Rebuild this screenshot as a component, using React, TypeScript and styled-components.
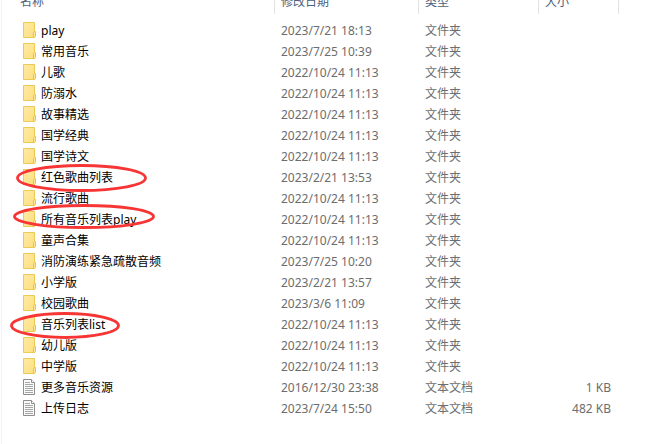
import React from 'react';
import styled, { createGlobalStyle } from 'styled-components';

const GlobalStyle = createGlobalStyle`
  body {
    margin: 0;
    background: #fff;
    color: #000;
    font: 12px/20px "Noto Sans", "Noto Sans CJK SC", sans-serif;
  }
`;

const Pane = styled.main`
  min-height: 100vh;
  margin-left: 1px;
  box-sizing: border-box;
  border-left: 1px solid #f3f3f3;
  overflow: hidden;
`;

const FileTable = styled.table`
  width: 100%;
  table-layout: fixed;
  border-collapse: separate;
  border-spacing: 0;
`;

const Column = styled.col<{ $width?: number }>`
  width: ${({ $width }) => ($width ? `${$width}px` : 'auto')};
`;

const HeaderCell = styled.th<{ $inset: number; $divided?: boolean }>`
  height: 14px;
  box-sizing: border-box;
  padding: 0 0 0 ${({ $inset }) => $inset}px;
  border-right: ${({ $divided }) => ($divided ? '1px solid #e2e2e2' : 'none')};
  text-align: left;
  vertical-align: top;
`;

const SortButton = styled.button`
  display: block;
  margin: -8px 0 0;
  padding: 0;
  border: 0;
  background: none;
  color: #4c607a;
  font: inherit;
  font-weight: 400;
  line-height: 20px;
`;

const Body = styled.tbody`
  &::before {
    content: '';
    display: table-row;
    height: 6px;
  }
`;

const Cell = styled.td<{ $align?: 'left' | 'right' }>`
  height: 21px;
  box-sizing: border-box;
  padding: 1px 8px 0 6px;
  color: #6d6d6d;
  text-align: ${({ $align }) => $align ?? 'left'};
  white-space: nowrap;
`;

const NameCell = styled(Cell)`
  position: relative;
  padding: 0 0 0 21px;
  color: #000;
`;

const FileName = styled.div`
  display: flex;
  align-items: flex-start;
  gap: 5px;
  height: 21px;
  line-height: 22px;
`;

const Icon = styled.svg`
  flex: none;
  width: 13px;
  height: 16px;
  margin-top: 2px;
`;

const Mark = styled.svg<{ $left: number; $top: number }>`
  position: absolute;
  z-index: 1;
  left: ${({ $left }) => $left}px;
  top: ${({ $top }) => $top}px;
  overflow: visible;
  pointer-events: none;
`;

const FolderIcon = () => (
  <Icon viewBox="0 0 13 16" aria-hidden="true">
    <defs>
      <linearGradient id="folder" x1="0" y1="0" x2="1" y2="1">
        <stop offset="0" stopColor="#ffeaa4" />
        <stop offset="1" stopColor="#fddf80" />
      </linearGradient>
    </defs>
    <path d="M.5.5h11v15H.5z" fill="url(#folder)" stroke="#eacb55" />
    <path d="M10.5 15.5v-5l1-1h1v5l-1 1z" fill="#ffe794" stroke="#e8c344" />
  </Icon>
);

const TextIcon = () => (
  <Icon viewBox="0 0 13 16" aria-hidden="true">
    <path d="M.5.5h8l3 3v12H.5z" fill="#fafafa" stroke="#8e8e8e" />
    <path d="M8.5.5v3h3" fill="#fff" stroke="#8e8e8e" />
    <path d="M2 3.5h5M2 5.5h8M2 7.5h8M2 9.5h8M2 11.5h8M2 13.5h8" stroke="#a3a8a6" />
  </Icon>
);

interface Ring {
  left: number;
  top: number;
  width: number;
  height: number;
}

interface Entry {
  name: string;
  date: string;
  size?: string;
  ring?: Ring;
}

const entries: Entry[] = [
  { name: 'play', date: '2023/7/21 18:13' },
  { name: '常用音乐', date: '2023/7/25 10:39' },
  { name: '儿歌', date: '2022/10/24 11:13' },
  { name: '防溺水', date: '2022/10/24 11:13' },
  { name: '故事精选', date: '2022/10/24 11:13' },
  { name: '国学经典', date: '2022/10/24 11:13' },
  { name: '国学诗文', date: '2022/10/24 11:13' },
  { name: '红色歌曲列表', date: '2023/2/21 13:53', ring: { left: 14, top: -3, width: 131, height: 28 } },
  { name: '流行歌曲', date: '2022/10/24 11:13' },
  { name: '所有音乐列表play', date: '2022/10/24 11:13', ring: { left: 11, top: -5, width: 142, height: 25 } },
  { name: '童声合集', date: '2022/10/24 11:13' },
  { name: '消防演练紧急疏散音频', date: '2023/7/25 10:20' },
  { name: '小学版', date: '2023/2/21 13:57' },
  { name: '校园歌曲', date: '2023/3/6 11:09' },
  { name: '音乐列表list', date: '2022/10/24 11:13', ring: { left: 8, top: -2, width: 110, height: 27 } },
  { name: '幼儿版', date: '2022/10/24 11:13' },
  { name: '中学版', date: '2022/10/24 11:13' },
  { name: '更多音乐资源', date: '2016/12/30 23:38', size: '1 KB' },
  { name: '上传日志', date: '2023/7/24 15:50', size: '482 KB' },
];

const RingMark = ({ left, top, width, height }: Ring) => (
  <Mark $left={left} $top={top} width={width} height={height} aria-hidden="true">
    <ellipse
      cx={width / 2}
      cy={height / 2}
      rx={width / 2 - 1.5}
      ry={height / 2 - 1.5}
      fill="none"
      stroke="#f73535"
      strokeWidth="2.8"
    />
  </Mark>
);

export default function App() {
  return (
    <>
      <GlobalStyle />
      <Pane>
        <FileTable>
          <colgroup>
            <Column $width={273} />
            <Column $width={144} />
            <Column $width={120} />
            <Column $width={80} />
            <Column />
          </colgroup>
          <thead>
            <tr>
              <HeaderCell $inset={18} $divided><SortButton>名称</SortButton></HeaderCell>
              <HeaderCell $inset={6} $divided><SortButton>修改日期</SortButton></HeaderCell>
              <HeaderCell $inset={6} $divided><SortButton>类型</SortButton></HeaderCell>
              <HeaderCell $inset={6} $divided><SortButton>大小</SortButton></HeaderCell>
              <HeaderCell as="td" $inset={0} />
            </tr>
          </thead>
          <Body>
            {entries.map(({ name, date, size, ring }) => (
              <tr key={name}>
                <NameCell>
                  <FileName>
                    {size ? <TextIcon /> : <FolderIcon />}
                    <span>{name}</span>
                  </FileName>
                  {ring && <RingMark {...ring} />}
                </NameCell>
                <Cell>{date}</Cell>
                <Cell>{size ? '文本文档' : '文件夹'}</Cell>
                <Cell $align="right">{size}</Cell>
                <Cell />
              </tr>
            ))}
          </Body>
        </FileTable>
      </Pane>
    </>
  );
}
